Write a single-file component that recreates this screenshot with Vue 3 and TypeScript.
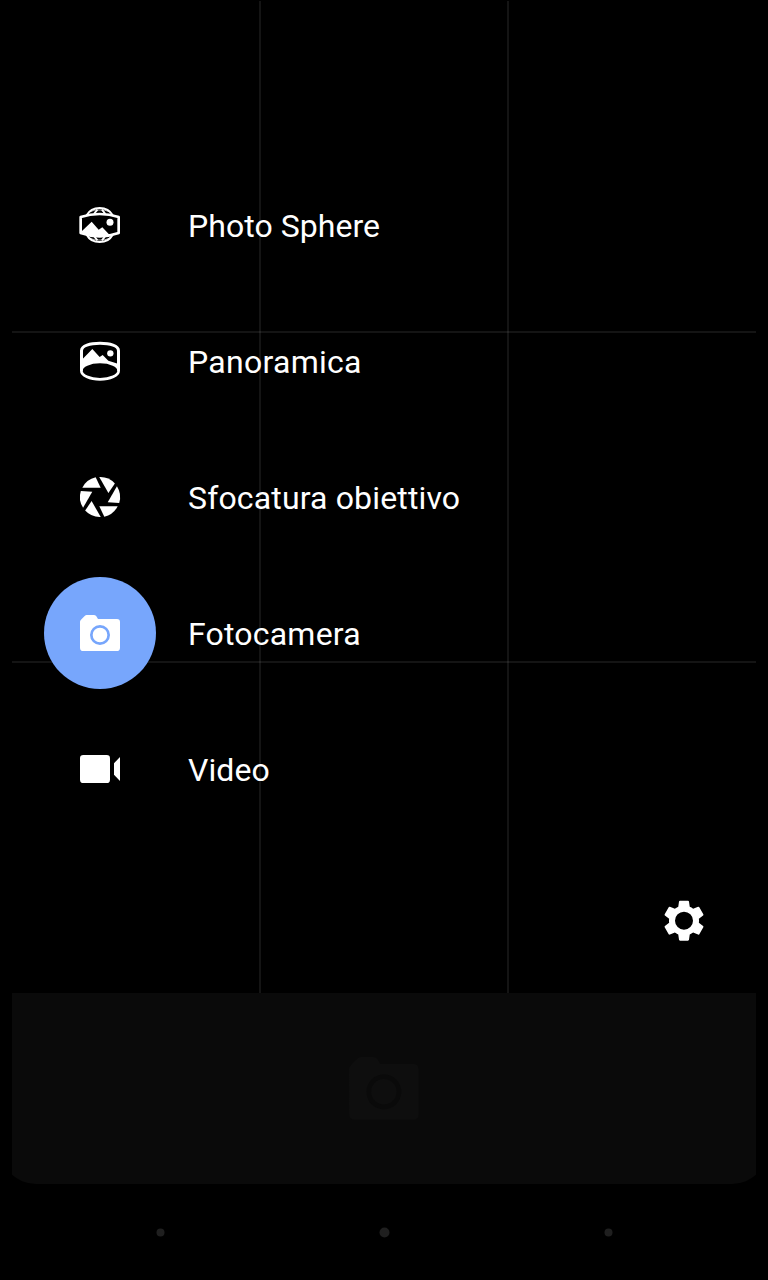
<script setup lang="ts">
interface Mode {
  id: string
  label: string
  viewBox: string
  spacing: number
}

const modes: Mode[] = [
  { id: 'sphere', label: 'Photo Sphere', viewBox: '0 0 240 210', spacing: 0.05 },
  { id: 'panorama', label: 'Panoramica', viewBox: '0 3 240 210', spacing: 0.28 },
  { id: 'blur', label: 'Sfocatura obiettivo', viewBox: '0 6 240 210', spacing: 0.15 },
  { id: 'photo', label: 'Fotocamera', viewBox: '60 84 240 210', spacing: 0.2 },
  { id: 'video', label: 'Video', viewBox: '0 -3 240 210', spacing: 0.1 },
]
const selected = 'photo'
const blades = [0, 60, 120, 180, 240, 300]
const camera =
  'M140 135H161Q166 135 169 139L174 147H231Q240 147 240 156V233Q240 243 230 243H130Q120 243 120 233V155Q120 152 123 149L134 138Q137 135 140 135ZM180 165A30 30 0 1 0 180 225A30 30 0 1 0 180 165ZM180 173A22 22 0 1 1 180 217A22 22 0 1 1 180 173Z'
</script>

<template>
  <main class="screen">
    <section class="viewfinder">
      <div class="thirds">
        <i class="line v v1"></i><i class="line v v2"></i>
        <i class="line h h1"></i><i class="line h h2"></i>
      </div>
      <nav class="modes">
        <div v-for="m in modes" :key="m.id" class="mode">
          <span class="disc" :class="{ active: m.id === selected }">
            <svg width="80" height="70" :viewBox="m.viewBox" fill="#fff">
              <g v-if="m.id === 'sphere'">
                <g fill="none" stroke="#fff">
                  <path d="M80 76C88 61 103 54 119 54S150 61 158 76M80 134C88 149 103 156 119 156S150 149 158 134" stroke-width="6" />
                  <path d="M102 72L112 59M136 72L126 59M102 138L112 151M136 138L126 151" stroke-width="6" />
                  <path d="M88 66L106 60H132L150 66M88 144L106 150H132L150 144" stroke-width="2" />
                  <path d="M62 81Q90 72 119 72T176 81V129Q148 139 119 139T62 129Z" stroke-width="8" stroke-linejoin="round" />
                </g>
                <path d="M62 127L95 95L116 119L127 112L149 135Q119 143 91 137Z" />
                <circle cx="150" cy="97" r="10.5" />
              </g>
              <g v-else-if="m.id === 'panorama'">
                <path d="M64.500 137V77C64.500 62 90 55 120 55S175.500 62 175.500 77V137" fill="none" stroke="#fff" stroke-width="9" />
                <ellipse cx="120" cy="137" rx="56" ry="26" fill="none" stroke="#fff" stroke-width="8" />
                <path d="M62 108L97 72L119 96L128 90L145 107L176 117V132C167 119 148 110 120 110S73 118 65 132Z" />
                <circle cx="151" cy="85" r="9.500" />
              </g>
              <g v-else-if="m.id === 'blur'" transform="translate(120 111)">
                <path v-for="a in blades" :key="a" :transform="`rotate(${a})`" d="M-53 -28H2L-13 -59A60 60 0 0 0 -53 -28Z" />
              </g>
              <path v-else-if="m.id === 'photo'" :d="camera" fill-rule="evenodd" />
              <g v-else>
                <rect x="60" y="60" width="90" height="84" rx="10" />
                <path d="M162 85L180 66V138L162 119Z" />
              </g>
            </svg>
          </span>
          <span class="label" :style="{ letterSpacing: `${m.spacing}px` }">{{ m.label }}</span>
        </div>
      </nav>
      <svg class="settings" width="80" height="80" viewBox="0 0 240 240" fill="#fff">
        <path
          transform="translate(48 50) scale(6)"
          fill-rule="evenodd"
          d="M19.43 12.98c.04-.32.07-.64.07-.98s-.03-.66-.07-.98l2.110-1.65c.19-.15.24-.42.12-.64l-2-3.46c-.12-.22-.39-.3-.61-.22l-2.490 1c-.52-.4-1.08-.73-1.690-.98l-.38-2.650C14.46 2.180 14.250 2 14 2h-4c-.25 0-.46.18-.49.42l-.38 2.650c-.61.25-1.170.59-1.690.98l-2.490-1c-.23-.09-.49 0-.61.22l-2 3.460c-.13.22-.07.49.12.64l2.110 1.650c-.04.32-.07.65-.07.98s.03.66.07.98l-2.110 1.650c-.19.15-.24.42-.12.64l2 3.460c.12.22.39.3.61.22l2.490-1c.52.4 1.080.73 1.690.98l.38 2.650c.03.24.24.42.49.42h4c.25 0 .46-.18.49-.42l.38-2.650c.61-.25 1.170-.59 1.690-.98l2.490 1c.23.09.49 0 .61-.22l2-3.460c.12-.22.07-.49-.12-.64l-2.110-1.650zM12 16.5a4.5 4.5 0 1 1 0-9a4.5 4.5 0 1 1 0 9z"
        />
      </svg>
    </section>
    <section class="shutter">
      <div class="bar">
        <svg width="69.7" height="62.7" viewBox="120 135 120 108" fill="#0e0e0e">
          <path :d="camera" fill-rule="evenodd" />
        </svg>
      </div>
    </section>
    <footer class="navbar">
      <i class="dot"></i><i class="dot home"></i><i class="dot"></i>
    </footer>
  </main>
</template>

<style>
body { background: #000; }
</style>

<style scoped>
.screen {
  width: 768px;
  height: 1280px;
  background: #000;
  color: #fff;
  font-family: Roboto, "Liberation Sans", sans-serif;
  overflow: hidden;
}
.viewfinder {
  position: relative;
  box-sizing: border-box;
  height: 993px;
  padding: 169px 44px 0;
}
.thirds { position: absolute; inset: 0 12px; }
.line { position: absolute; background: rgba(255, 255, 255, 0.08); }
.v { top: 1px; bottom: 0; width: 2px; }
.h { left: 0; right: 0; height: 2px; }
.v1 { left: 247px; }
.v2 { left: 495px; }
.h1 { top: 331px; }
.h2 { top: 661px; }
.modes {
  position: relative;
  display: flex;
  flex-direction: column;
  gap: 24px;
}
.mode { display: flex; align-items: center; height: 112px; }
.disc {
  display: flex;
  align-items: center;
  justify-content: center;
  width: 112px;
  height: 112px;
  border-radius: 50%;
}
.active { background: #77a6fc; }
.label {
  margin-left: 32px;
  font-size: 32px;
  line-height: 38px;
  padding-top: 2px;
  white-space: nowrap;
}
.settings { position: absolute; right: 44px; bottom: 33px; }
.shutter { height: 191px; margin: 0 12px; overflow: hidden; }
.bar {
  display: flex;
  justify-content: center;
  box-sizing: border-box;
  height: 191px;
  margin: 0 -12px;
  padding-top: 64px;
  background: #0a0a0a;
  border-radius: 0 0 36px 36px;
}
.navbar {
  display: flex;
  align-items: center;
  justify-content: center;
  gap: 215px;
  height: 97px;
  padding-left: 1px;
}
.dot { width: 8px; height: 8px; border-radius: 50%; background: #1f1f1f; transform: translate(-0.5px, -0.5px); }
.home { width: 10px; height: 10px; }
</style>
